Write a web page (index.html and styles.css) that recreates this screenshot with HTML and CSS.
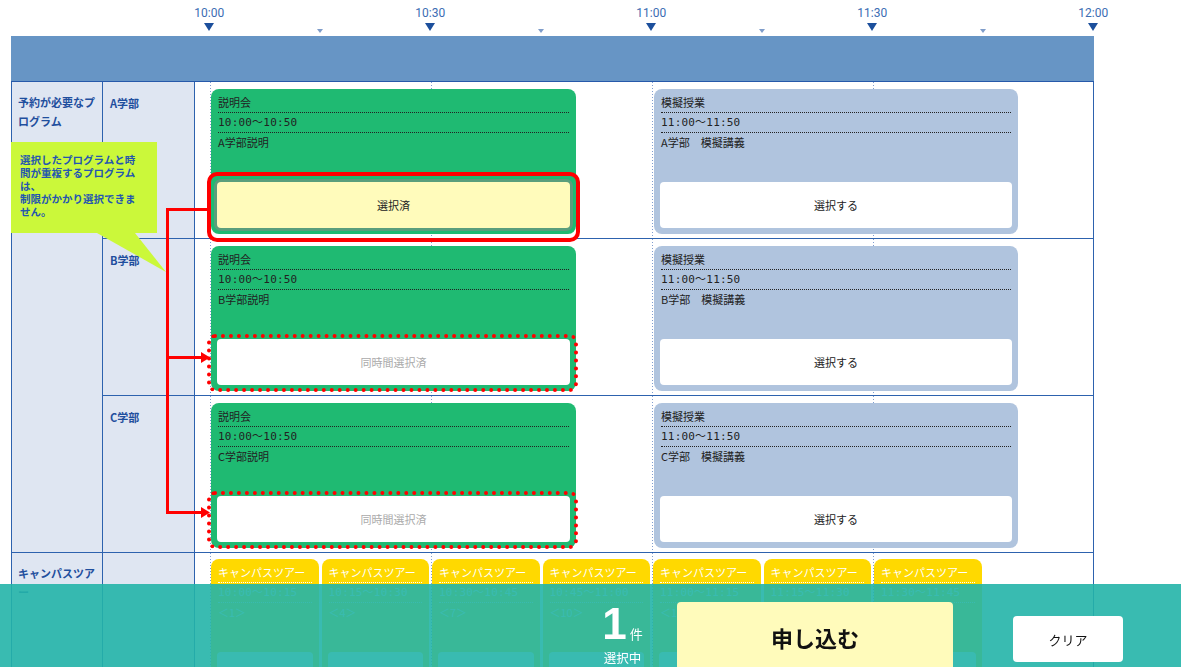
FILE: index.html
```html
<!DOCTYPE html>
<html lang="ja">
<head>
    <meta charset="UTF-8">
    <meta name="viewport" content="width=device-width, initial-scale=1.0">
    <title>プログラム選択</title>
    <link rel="stylesheet" href="styles.css">
</head>
<body>
    <div class="page">
        <div class="scale">
            <div class="tick"><span class="tick-label">10:00</span><span class="tri"></span></div>
            <div class="tick"><span class="tri tri-sm"></span></div>
            <div class="tick"><span class="tick-label">10:30</span><span class="tri"></span></div>
            <div class="tick"><span class="tri tri-sm"></span></div>
            <div class="tick"><span class="tick-label">11:00</span><span class="tri"></span></div>
            <div class="tick"><span class="tri tri-sm"></span></div>
            <div class="tick"><span class="tick-label">11:30</span><span class="tri"></span></div>
            <div class="tick"><span class="tri tri-sm"></span></div>
            <div class="tick"><span class="tick-label">12:00</span><span class="tri"></span></div>
        </div>

        <div class="board-head"></div>

        <div class="grid">
            <div class="cat cat-main">予約が必要なプログラム</div>

            <div class="dept">A学部</div>
            <div class="lane">
                <div class="card card-green">
                    <div class="card-line">説明会</div>
                    <div class="card-line card-time">10:00〜10:50</div>
                    <div class="card-line card-last">A学部説明</div>
                    <div class="card-btn is-picked">選択済</div>
                    <div class="frame-solid"></div>
                </div>
                <div class="card card-blue">
                    <div class="card-line">模擬授業</div>
                    <div class="card-line card-time">11:00〜11:50</div>
                    <div class="card-line card-last">A学部　模擬講義</div>
                    <div class="card-btn">選択する</div>
                </div>
            </div>

            <div class="dept">B学部</div>
            <div class="lane">
                <div class="card card-green">
                    <div class="card-line">説明会</div>
                    <div class="card-line card-time">10:00〜10:50</div>
                    <div class="card-line card-last">B学部説明</div>
                    <div class="card-btn is-locked">同時間選択済</div>
                    <div class="frame-dotted"></div>
                </div>
                <div class="card card-blue">
                    <div class="card-line">模擬授業</div>
                    <div class="card-line card-time">11:00〜11:50</div>
                    <div class="card-line card-last">B学部　模擬講義</div>
                    <div class="card-btn">選択する</div>
                </div>
            </div>

            <div class="dept">C学部</div>
            <div class="lane">
                <div class="card card-green">
                    <div class="card-line">説明会</div>
                    <div class="card-line card-time">10:00〜10:50</div>
                    <div class="card-line card-last">C学部説明</div>
                    <div class="card-btn is-locked">同時間選択済</div>
                    <div class="frame-dotted"></div>
                </div>
                <div class="card card-blue">
                    <div class="card-line">模擬授業</div>
                    <div class="card-line card-time">11:00〜11:50</div>
                    <div class="card-line card-last">C学部　模擬講義</div>
                    <div class="card-btn">選択する</div>
                </div>
            </div>

            <div class="cat">キャンパスツアー</div>
            <div class="dept"></div>
            <div class="lane lane-tour">
                <div class="tour"><div class="tour-line">キャンパスツアー</div><div class="tour-line card-time">10:00〜10:15</div><div class="tour-line tour-last">＜1＞</div><div class="tour-btn"></div></div>
                <div class="tour"><div class="tour-line">キャンパスツアー</div><div class="tour-line card-time">10:15〜10:30</div><div class="tour-line tour-last">＜4＞</div><div class="tour-btn"></div></div>
                <div class="tour"><div class="tour-line">キャンパスツアー</div><div class="tour-line card-time">10:30〜10:45</div><div class="tour-line tour-last">＜7＞</div><div class="tour-btn"></div></div>
                <div class="tour"><div class="tour-line">キャンパスツアー</div><div class="tour-line card-time">10:45〜11:00</div><div class="tour-line tour-last">＜10＞</div><div class="tour-btn"></div></div>
                <div class="tour"><div class="tour-line">キャンパスツアー</div><div class="tour-line card-time">11:00〜11:15</div><div class="tour-line tour-last">＜13＞</div><div class="tour-btn"></div></div>
                <div class="tour"><div class="tour-line">キャンパスツアー</div><div class="tour-line card-time">11:15〜11:30</div><div class="tour-line tour-last">＜16＞</div><div class="tour-btn"></div></div>
                <div class="tour"><div class="tour-line">キャンパスツアー</div><div class="tour-line card-time">11:30〜11:45</div><div class="tour-line tour-last">＜19＞</div><div class="tour-btn"></div></div>
            </div>
        </div>

        <!-- 注釈 -->
        <div class="tip">選択したプログラムと時<br>間が重複するプログラム<br>は、<br>制限がかかり選択できま<br>せん。</div>
        <svg class="links" width="1181" height="667" viewBox="0 0 1181 667">
            <g stroke="#ff0000" stroke-width="3" fill="none">
                <path d="M167.5 208 V513"/>
                <path d="M166 209.5 H208"/>
                <path d="M166 357.5 H202"/>
                <path d="M166 512.5 H202"/>
            </g>
            <g fill="#ff0000">
                <path d="M201 352 L210 357.5 L201 363 Z"/>
                <path d="M201 507 L210 512.5 L201 518 Z"/>
            </g>
        </svg>
    </div>

    <div class="footer">
        <div class="count">
            <div class="count-row"><span class="count-num">1</span><span class="count-unit">件</span></div>
            <div class="count-label">選択中</div>
        </div>
        <div class="apply">申し込む</div>
        <div class="clear">クリア</div>
    </div>
</body>
</html>
```

FILE: styles.css
```css
body {
    margin: 0;
    font-family: "Noto Sans CJK JP", "Noto Sans", sans-serif;
    background-color: #fff;
    overflow: hidden;
}
.page {
    position: relative;
    width: 1083px;
    padding-left: 11px;
}

/* 時間軸 */
.scale {
    display: flex;
    align-items: flex-end;
    height: 36px;
    margin-left: 143px;
}
.tick {
    flex: none;
    width: 110.5px;
    display: flex;
    flex-direction: column;
    align-items: center;
}
.tick-label {
    font-family: Roboto, sans-serif;
    font-size: 12px;
    line-height: 14px;
    color: #3c6db3;
    margin-bottom: 3px;
}
.tri {
    width: 0;
    height: 0;
    border-left: 5px solid transparent;
    border-right: 5px solid transparent;
    border-top: 8px solid #1c4f9c;
    margin-bottom: 5px;
}
.tri-sm {
    border-left-width: 3px;
    border-right-width: 3px;
    border-top: 4px solid #7f9dca;
    margin-bottom: 3px;
}

.board-head {
    height: 45px;
    background-color: #6795c5;
    border-bottom: 1px solid #2659aa;
}

/* 表 */
.grid {
    display: grid;
    grid-template-columns: 91px 92px 899px;
    grid-template-rows: 157px 157px 157px 160px;
    border-left: 1px solid #2d62ae;
}
.cat, .dept, .lane {
    box-sizing: border-box;
    border-right: 1px solid #2d62ae;
    border-bottom: 1px solid #2d62ae;
}
.cat {
    background-color: #dfe6f2;
    padding: 11px 4px 0 6px;
    font-size: 11px;
    line-height: 19px;
    font-weight: bold;
    color: #1f4f9e;
}
.cat-main {
    grid-row: span 3;
}
.dept {
    background-color: #dfe6f2;
    padding: 12px 4px 0 7px;
    font-size: 11px;
    line-height: 19px;
    font-weight: bold;
    color: #1f4f9e;
}
.lane {
    display: flex;
    gap: 78px;
    padding: 7px 0 0 16px;
    background-image:
        linear-gradient(#7f9dd0 1px, transparent 1px),
        linear-gradient(#7f9dd0 1px, transparent 1px),
        linear-gradient(#7f9dd0 1px, transparent 1px),
        linear-gradient(#7f9dd0 1px, transparent 1px);
    background-size: 1px 3px;
    background-repeat: repeat-y;
    background-position: 15px 0, 236px 0, 457px 0, 678px 0;
}

/* カード */
.card {
    position: relative;
    box-sizing: border-box;
    width: 365px;
    height: 145px;
    border-radius: 8px;
    padding: 4px 6px 6px;
    display: flex;
    flex-direction: column;
}
.card-green {
    background-color: #1fba72;
}
.card-blue {
    width: 364px;
    background-color: #b0c4de;
}
.card-line {
    margin: 0 1px;
    font-size: 11px;
    line-height: 19px;
    color: #222;
    border-bottom: 1px dotted #222;
}
.card-time {
    font-family: "DejaVu Sans Mono", "Noto Sans CJK JP", monospace;
    font-size: 11px;
    letter-spacing: 0.2px;
}
.card-last {
    border-bottom: none;
}
.card-btn {
    margin-top: auto;
    height: 46px;
    border-radius: 4px;
    background-color: #fff;
    display: flex;
    align-items: center;
    justify-content: center;
    font-size: 11px;
    color: #222;
}
.card-btn.is-picked {
    background-color: #fffbbb;
    box-shadow: 0 0 0 3px #5a9e7c;
}
.card-btn.is-locked {
    color: #aaa;
}
.frame-solid {
    position: absolute;
    left: -4px;
    right: -4px;
    top: 83px;
    bottom: -8px;
    border: 4px solid #ff0000;
    border-radius: 10px;
}
.frame-dotted {
    position: absolute;
    left: -4px;
    right: -2px;
    top: 88px;
    bottom: -1px;
    border: 4px dotted #ff0000;
    border-radius: 8px;
}

/* キャンパスツアー */
.lane-tour {
    gap: 3px;
    padding-top: 6px;
}
.tour {
    box-sizing: border-box;
    flex: none;
    width: 107.5px;
    height: 150px;
    border-radius: 8px;
    background-color: #ffd900;
    padding: 4px 6px;
    color: #fff;
}
.tour-line {
    margin: 0 1px;
    font-size: 11px;
    line-height: 19px;
    border-bottom: 1px dotted #fff;
    white-space: nowrap;
}
.tour-last {
    border-bottom: none;
}
.tour-btn {
    margin-top: 30px;
    height: 40px;
    border-radius: 4px;
    background-color: #fff;
}

/* 注釈 */
.tip {
    position: absolute;
    left: 11px;
    top: 142px;
    box-sizing: border-box;
    width: 146px;
    height: 91px;
    padding: 11px 6px 0 9px;
    background-color: #cbf83a;
    font-size: 10.5px;
    line-height: 13px;
    font-weight: bold;
    color: #2456b0;
}
.tip::after {
    content: "";
    position: absolute;
    left: 86px;
    top: 100%;
    width: 69px;
    height: 39px;
    background-color: #cbf83a;
    clip-path: polygon(0 0, 38px 0, 100% 100%);
}
.links {
    position: absolute;
    left: 0;
    top: 0;
    pointer-events: none;
}

/* 下部バー */
.footer {
    position: fixed;
    left: 0;
    right: 0;
    bottom: 0;
    height: 83px;
    box-sizing: border-box;
    padding: 18px 58px 0 0;
    display: flex;
    justify-content: flex-end;
    align-items: flex-start;
    overflow: hidden;
    background-color: rgba(36, 180, 168, 0.9);
}
.count {
    width: 45px;
    margin-right: 32px;
    color: #fff;
    text-align: center;
}
.count-row {
    margin-top: 3px;
    height: 38px;
    display: flex;
    justify-content: center;
    align-items: baseline;
}
.count-num {
    font-family: "Liberation Sans", Arial, sans-serif;
    font-size: 44px;
    line-height: 38px;
    font-weight: bold;
}
.count-unit {
    font-size: 13px;
    margin-left: 3px;
}
.count-label {
    margin-top: 6.8px;
    font-size: 12.5px;
    line-height: 16px;
}
.apply {
    width: 276px;
    height: 70px;
    border-radius: 4px;
    background-color: #fffbbb;
    display: flex;
    align-items: center;
    justify-content: center;
    font-size: 22px;
    font-weight: bold;
    color: #111;
}
.clear {
    width: 110px;
    height: 46px;
    margin-top: 14px;
    margin-left: 60px;
    border-radius: 4px;
    background-color: #fff;
    display: flex;
    align-items: center;
    justify-content: center;
    font-size: 13px;
    color: #111;
}
```
